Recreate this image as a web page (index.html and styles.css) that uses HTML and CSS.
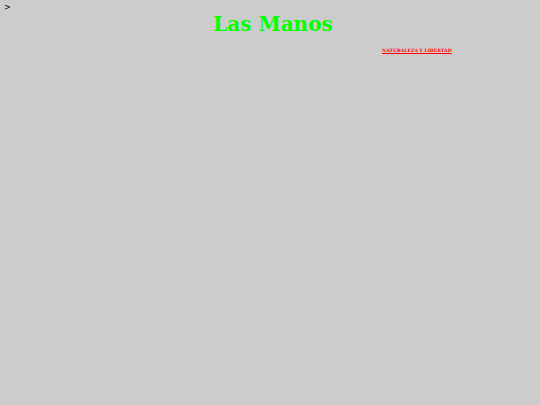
FILE: index.html
```html
<!DOCTYPE html>
<html>
<head>
<meta charset="utf-8">
<link rel="stylesheet" href="styles.css">
</head>
<body>
<div class="stray">&gt;</div>
<h1 class="title">Las Manos</h1>
<div class="links"><a class="link" href="#">NATURALEZA Y LIBERTAD</a></div>
</body>
</html>
```
FILE: styles.css
```css
html, body {
  margin: 0;
  padding: 0;
  background: #cccccc;
  height: 100%;
}
body {
  font-family: "DejaVu Serif", serif;
}
.stray {
  font-size: 8px;
  line-height: 10px;
  padding: 3px 0 0 4px;
  color: #000;
  font-family: "DejaVu Sans", sans-serif;
}
.title {
  margin: 0;
  margin-top: -1px;
  text-align: center;
  font-size: 20px;
  line-height: 24px;
  font-weight: bold;
  color: #00ff00;
  padding-left: 6px;
}
.links {
  padding: 7px 0 0 382px;
  line-height: 8px;
}
.link {
  font-size: 4.6px;
  font-weight: bold;
  color: #ff0000;
  text-decoration: underline;
}
```
